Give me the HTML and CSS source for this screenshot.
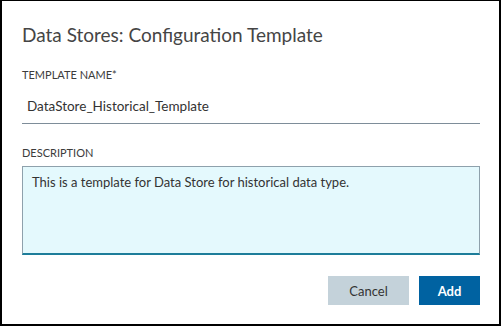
FILE: index.html
```html
<!DOCTYPE html>
<html>
<head>
<meta charset="utf-8">
<link rel="stylesheet" href="styles.css">
</head>
<body>
<div class="dialog">
  <h1 class="title">Data Stores: Configuration Template</h1>
  <div class="field">
    <div class="label">TEMPLATE NAME*</div>
    <div class="input">DataStore_Historical_Template</div>
  </div>
  <div class="field field-desc">
    <div class="label">DESCRIPTION</div>
    <div class="textarea">This is a template for Data Store for historical data type.</div>
  </div>
  <div class="actions">
    <button class="btn btn-cancel">Cancel</button>
    <button class="btn btn-add">Add</button>
  </div>
</div>
</body>
</html>
```

FILE: styles.css
```css
html, body {
  margin: 0;
  padding: 0;
  background: #ffffff;
}
.dialog {
  box-sizing: border-box;
  width: 501px;
  height: 326px;
  border: 2px solid #000;
  border-top-width: 1px;
  padding: 0 19px 0 20px;
  font-family: Lato, "Noto Sans", sans-serif;
  color: #3b3b3b;
  display: flex;
  flex-direction: column;
}
.title {
  margin: 22px 0 0 0;
  font-size: 19px;
  line-height: 24px;
  font-weight: 400;
  color: #454545;
}
.field {
  margin-top: 21px;
  display: flex;
  flex-direction: column;
}
.label {
  font-size: 11px;
  line-height: 14px;
  color: #3c3c3c;
}
.input {
  margin-top: 16px;
  padding: 0 5px 9px;
  font-size: 13.5px;
  line-height: 16px;
  color: #333;
  border-bottom: 1px solid #7e8d99;
}
.field-desc {
  margin-top: 22px;
}
.textarea {
  margin-top: 6px;
  box-sizing: border-box;
  height: 89px;
  background: #e4f9fd;
  border: 1px solid #8ea1ac;
  border-bottom: 2px solid #1d7d9a;
  padding: 7px 9px;
  font-size: 13px;
  line-height: 16px;
  color: #333;
}
.actions {
  margin-top: 21px;
  display: flex;
  justify-content: flex-end;
  gap: 10px;
}
.btn {
  height: 29px;
  border: none;
  font-family: Lato, "Noto Sans", sans-serif;
  font-size: 13px;
  padding: 0;
}
.btn-cancel {
  width: 81px;
  background: #c4d2da;
  color: #333;
}
.btn-add {
  width: 61px;
  background: #0062a1;
  color: #fff;
  font-weight: 700;
}
```
